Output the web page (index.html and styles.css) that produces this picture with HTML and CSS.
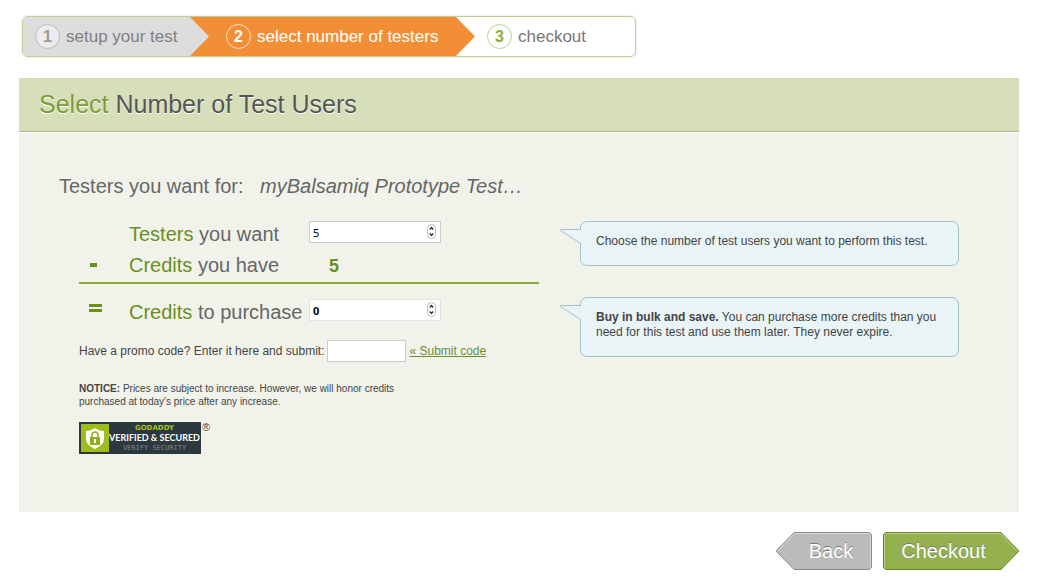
FILE: index.html
```html
<!DOCTYPE html>
<html lang="en">
<head>
<meta charset="utf-8">
<title>Select Number of Test Users</title>
<link rel="stylesheet" href="styles.css">
</head>
<body>
<div class="page">
  <ol class="steps">
    <li class="step step-done"><span class="step-number">1</span>setup your test</li>
    <li class="step step-current" aria-current="step"><span class="step-number">2</span>select number of testers</li>
    <li class="step step-next"><span class="step-number">3</span>checkout</li>
  </ol>

  <main class="panel">
    <h1 class="panel-title"><span class="panel-title-accent">Select</span> Number of Test Users</h1>
    <div class="panel-body">
      <h2 class="test-name">Testers you want for: <em class="test-name-value">myBalsamiq Prototype Test…</em></h2>
      <div class="columns">
        <form class="order">
          <div class="row">
            <span class="operator"></span>
            <label class="row-label" for="testers"><span class="accent">Testers</span> you want</label>
            <span class="spinner">
              <input class="field number-field" type="number" id="testers" value="5">
              <svg class="spinner-arrows" viewBox="0 0 9 15" aria-hidden="true"><rect class="spinner-pill" x=".5" y=".5" width="8" height="14" rx="4"/><path class="spinner-mark" d="M2.8 5.6 4.5 3.6 6.2 5.6M2.8 9.4 4.5 11.4 6.2 9.4"/></svg>
            </span>
          </div>
          <div class="row">
            <span class="operator"><svg class="operator-icon" viewBox="0 0 14 12" aria-label="minus"><path d="M1 4h7v4H1z"/></svg></span>
            <span class="row-label"><span class="accent">Credits</span> you have</span>
            <output class="credits">5</output>
          </div>
          <div class="row row-total">
            <span class="operator operator-equals"><svg class="operator-icon" viewBox="0 0 14 12" aria-label="equals"><path d="M0 1h13v3H0zM0 6h13v3H0z"/></svg></span>
            <label class="row-label" for="purchase"><span class="accent">Credits</span> to purchase</label>
            <span class="spinner">
              <input class="field number-field number-field-total" type="number" id="purchase" value="0">
              <svg class="spinner-arrows" viewBox="0 0 9 15" aria-hidden="true"><rect class="spinner-pill" x=".5" y=".5" width="8" height="14" rx="4"/><path class="spinner-mark" d="M2.8 5.6 4.5 3.6 6.2 5.6M2.8 9.4 4.5 11.4 6.2 9.4"/></svg>
            </span>
          </div>
          <div class="promo">
            <label for="promo">Have a promo code? Enter it here and submit:</label>
            <input class="field promo-field" type="text" id="promo">
            <a class="promo-link" href="#">« Submit code</a>
          </div>
          <p class="notice"><strong>NOTICE:</strong> Prices are subject to increase. However, we will honor credits purchased at today's price after any increase.</p>
          <div class="seal-line">
            <a class="seal" href="#">
              <span class="seal-mark">
                <svg class="seal-icon" viewBox="0 0 28 28" aria-hidden="true">
                  <path fill="#fff" d="M5 7c4 0 6-1 9-3 3 2 5 3 9 3v8c0 5-5 8-9 10-4-2-9-5-9-10z"/>
                  <path fill="#8fb01a" d="M9 13h10v8H9z"/>
                  <path fill="none" stroke="#8fb01a" stroke-width="1.500" d="M11 13v-2a3 3 0 0 1 6 0V13"/>
                  <path fill="#fff" d="M13 15h2v4h-2z"/>
                </svg>
              </span>
              <span class="seal-text">
                <span class="seal-brand">GODADDY</span>
                <span class="seal-status">VERIFIED &amp; SECURED</span>
                <span class="seal-verify">VERIFY SECURITY</span>
              </span>
            </a>
            <span class="registered">®</span>
          </div>
        </form>

        <aside class="tips">
          <div class="tip">
            <svg class="tip-tail" viewBox="0 0 23 16" aria-hidden="true"><path d="M23 1.500H1.500L1.500 2.500 22 15.500H23z" fill="#e9f4f7"/><path d="M22 1.500H1.500V2.500L21.500 15.500" fill="none" stroke="#a3c2c7"/></svg>
            <p class="tip-text">Choose the number of test users you want to perform this test.</p>
          </div>
          <div class="tip">
            <svg class="tip-tail" viewBox="0 0 23 16" aria-hidden="true"><path d="M23 1.500H1.500L1.500 2.500 22 15.500H23z" fill="#e9f4f7"/><path d="M22 1.500H1.500V2.500L21.500 15.500" fill="none" stroke="#a3c2c7"/></svg>
            <p class="tip-text"><strong>Buy in bulk and save.</strong> You can purchase more credits than you need for this test and use them later. They never expire.</p>
          </div>
        </aside>
      </div>
    </div>
  </main>

  <div class="actions">
    <button class="button button-back" type="button">
      <svg class="button-shape" viewBox="0 0 96 38" aria-hidden="true"><path fill="#bbb" stroke="#8a8a8a" d="M.5 18.500 18 .5H93.500L95.500 2.500V35.500L93.500 37.500H18L.5 19.500z"/><path fill="none" stroke="#d6d6d6" d="M2 19 18.500 1.500H93L94.500 3V35"/></svg>
      <span class="button-label">Back</span>
    </button>
    <button class="button button-checkout" type="button">
      <svg class="button-shape" viewBox="0 0 136 38" aria-hidden="true"><path fill="#94b04f" stroke="#5f8a1c" d="M2.500 .5H118L135.500 18.500V19.500L118 37.500H2.500L.5 35.500V2.500z"/><path fill="none" stroke="#bdd08e" d="M1.500 35V3L3 1.500H117.500L134 19"/></svg>
      <span class="button-label">Checkout</span>
    </button>
  </div>
</div>
</body>
</html>
```
FILE: styles.css
```css
* {
  box-sizing: border-box;
}

body {
  margin: 0;
  background: #fff;
  color: #444;
  font-family: "Liberation Sans", Arial, sans-serif;
  font-size: 12px;
  line-height: 15px;
}

.page {
  padding: 16px 20px 8px 19px;
}

/* Progress steps */
.steps {
  display: flex;
  width: 614px;
  max-width: 100%;
  margin: 0 0 21px 3px;
  padding: 0;
  list-style: none;
  overflow: hidden;
  border: 1px solid #bdd08e;
  border-radius: 6px;
  box-shadow: 0 0 3px #ddd;
}

.step {
  display: flex;
  align-items: center;
  gap: 6px;
  height: 39px;
  color: #777;
  font-size: 17px;
  white-space: nowrap;
}

.step-number {
  display: flex;
  align-items: center;
  justify-content: center;
  width: 25px;
  height: 25px;
  border: 1px solid #bdd08e;
  border-radius: 50%;
  font-size: 16px;
  font-weight: bold;
}

.step-done {
  width: 187px;
  padding-left: 12px;
  background: #ddd;
  color: #808080;
}

.step-done .step-number {
  border-color: #bbb;
  background: #ececec;
  color: #999;
}

.step-current {
  width: 285px;
  margin-left: -20px;
  padding-left: 36px;
  background: #f28f36;
  color: #fff;
  clip-path: polygon(0 0, calc(100% - 19px) 0, 100% 50%, calc(100% - 19px) 100%, 0 100%, 19px 50%);
}

.step-current .step-number {
  border-color: #fbe0c8;
}

.step-next {
  padding-left: 12px;
}

.step-next .step-number {
  color: #8aad3a;
}

/* Panel */
.panel {
  min-height: 434px;
  background: #f1f3ea;
}

.panel-title {
  margin: 0;
  padding: 11px 20px 12px;
  border-bottom: 1px solid #a9bd7c;
  box-shadow: 0 1px 0 #fff;
  background: #d6dfba;
  color: #555;
  font-size: 25px;
  font-weight: normal;
  line-height: 30px;
  text-shadow: 0 1px 0 #fff;
}

.panel-title-accent {
  color: #7c9c35;
}

.panel-body {
  padding: 42px 60px 20px 40px;
}

.test-name {
  margin: 0 0 23px;
  color: #666;
  font-size: 20px;
  font-weight: normal;
  line-height: 24px;
}

.test-name-value {
  margin-left: 11px;
}

.columns {
  display: flex;
  justify-content: space-between;
  align-items: flex-start;
  padding-left: 20px;
}

/* Order form */
.order {
  flex: 0 1 460px;
}

.row {
  display: grid;
  grid-template-columns: 50px 180px 1fr;
  align-items: center;
  height: 31px;
  color: #666;
  font-size: 20px;
  line-height: 24px;
}

.row:first-child {
  align-items: start;
  height: 28px;
}

.row:first-child .row-label {
  padding-top: 1px;
}

.row-total .row-label {
  padding-top: 3px;
}

.row-label {
  white-space: nowrap;
}

.row-total {
  height: 46px;
  margin-top: 2px;
  padding-top: 8px;
  border-top: 2px solid #8aac36;
}

.accent {
  color: #6a8f1f;
}

.operator {
  padding-left: 10px;
}

.operator-equals {
  padding-bottom: 3px;
}

.operator-icon {
  display: block;
  width: 14px;
  height: 12px;
  fill: #6a8f1f;
}

.credits {
  padding: 2px 0 0 20px;
  color: #6a8f1f;
  font-size: 18px;
  font-weight: bold;
}

.field {
  height: 22px;
  margin: 0;
  border: 1px solid #ccc;
  border-radius: 0;
  background: #fff;
  color: #000;
}

.spinner {
  position: relative;
  width: 132px;
  height: 22px;
}

.number-field {
  display: block;
  width: 100%;
  padding: 0 20px 0 3px;
  font: 11px "Noto Sans", sans-serif;
  appearance: textfield;
}

.number-field::-webkit-inner-spin-button {
  display: none;
}

.number-field-total {
  border-color: #e2e2e2;
  font-weight: bold;
}

.spinner-arrows {
  position: absolute;
  top: 3px;
  right: 5px;
  width: 9px;
  height: 15px;
}

.spinner-pill {
  fill: #fff;
  stroke: #bbb;
}

.spinner-mark {
  fill: none;
  stroke: #333;
  stroke-width: 1.5;
}

.promo {
  display: flex;
  align-items: center;
  gap: 3px;
  margin-top: 12px;
  white-space: nowrap;
}

.promo-field {
  width: 79px;
}

.promo-link {
  color: #6a8f2f;
}

.notice {
  max-width: 330px;
  margin: 20px 0 14px;
  font-size: 10px;
  line-height: 13px;
}

/* Security seal */
.seal-line {
  display: flex;
  align-items: flex-start;
  gap: 1px;
}

.seal {
  display: flex;
  width: 122px;
  height: 32px;
  padding: 2px;
  background: #2c383f;
  color: #fff;
  text-decoration: none;
}

.seal-mark {
  flex: none;
  width: 28px;
  height: 28px;
  background: #9dbd1b;
}

.seal-icon {
  display: block;
}

.seal-text {
  flex: 1;
  display: flex;
  flex-direction: column;
  align-items: center;
  white-space: nowrap;
}

.seal-brand {
  color: #a4c51d;
  font: bold 7px/8px "DejaVu Sans", sans-serif;
}

.seal-status {
  font: bold 9px/12px Lato, sans-serif;
}

.seal-verify {
  color: #7c8990;
  font: 7px/8px "DejaVu Sans Mono", monospace;
}

.registered {
  font-size: 11px;
  line-height: 10px;
}

/* Tips */
.tips {
  flex: 0 1 379px;
}

.tip {
  position: relative;
  min-height: 45px;
  margin-bottom: 31px;
  padding: 12px 15px 16px;
  border: 1px solid #a3c2c7;
  border-radius: 7px;
  background: #e9f4f7;
}

.tip-tail {
  position: absolute;
  top: 6px;
  left: -22px;
  width: 23px;
  height: 16px;
}

.tip-text {
  margin: 0;
}

/* Actions */
.actions {
  display: flex;
  justify-content: flex-end;
  gap: 11px;
  margin-top: 20px;
}

.button {
  position: relative;
  height: 38px;
  padding: 0;
  border: 0;
  background: none;
  color: #fff;
  font: 20px/24px "Liberation Sans", Arial, sans-serif;
  text-shadow: 0 -1px 0 #777;
  cursor: pointer;
}

.button-back {
  width: 96px;
  padding-left: 14px;
}

.button-checkout {
  width: 136px;
  padding-right: 15px;
}

.button-shape {
  position: absolute;
  inset: 0;
  width: 100%;
  height: 100%;
}

.button-label {
  position: relative;
}
```
